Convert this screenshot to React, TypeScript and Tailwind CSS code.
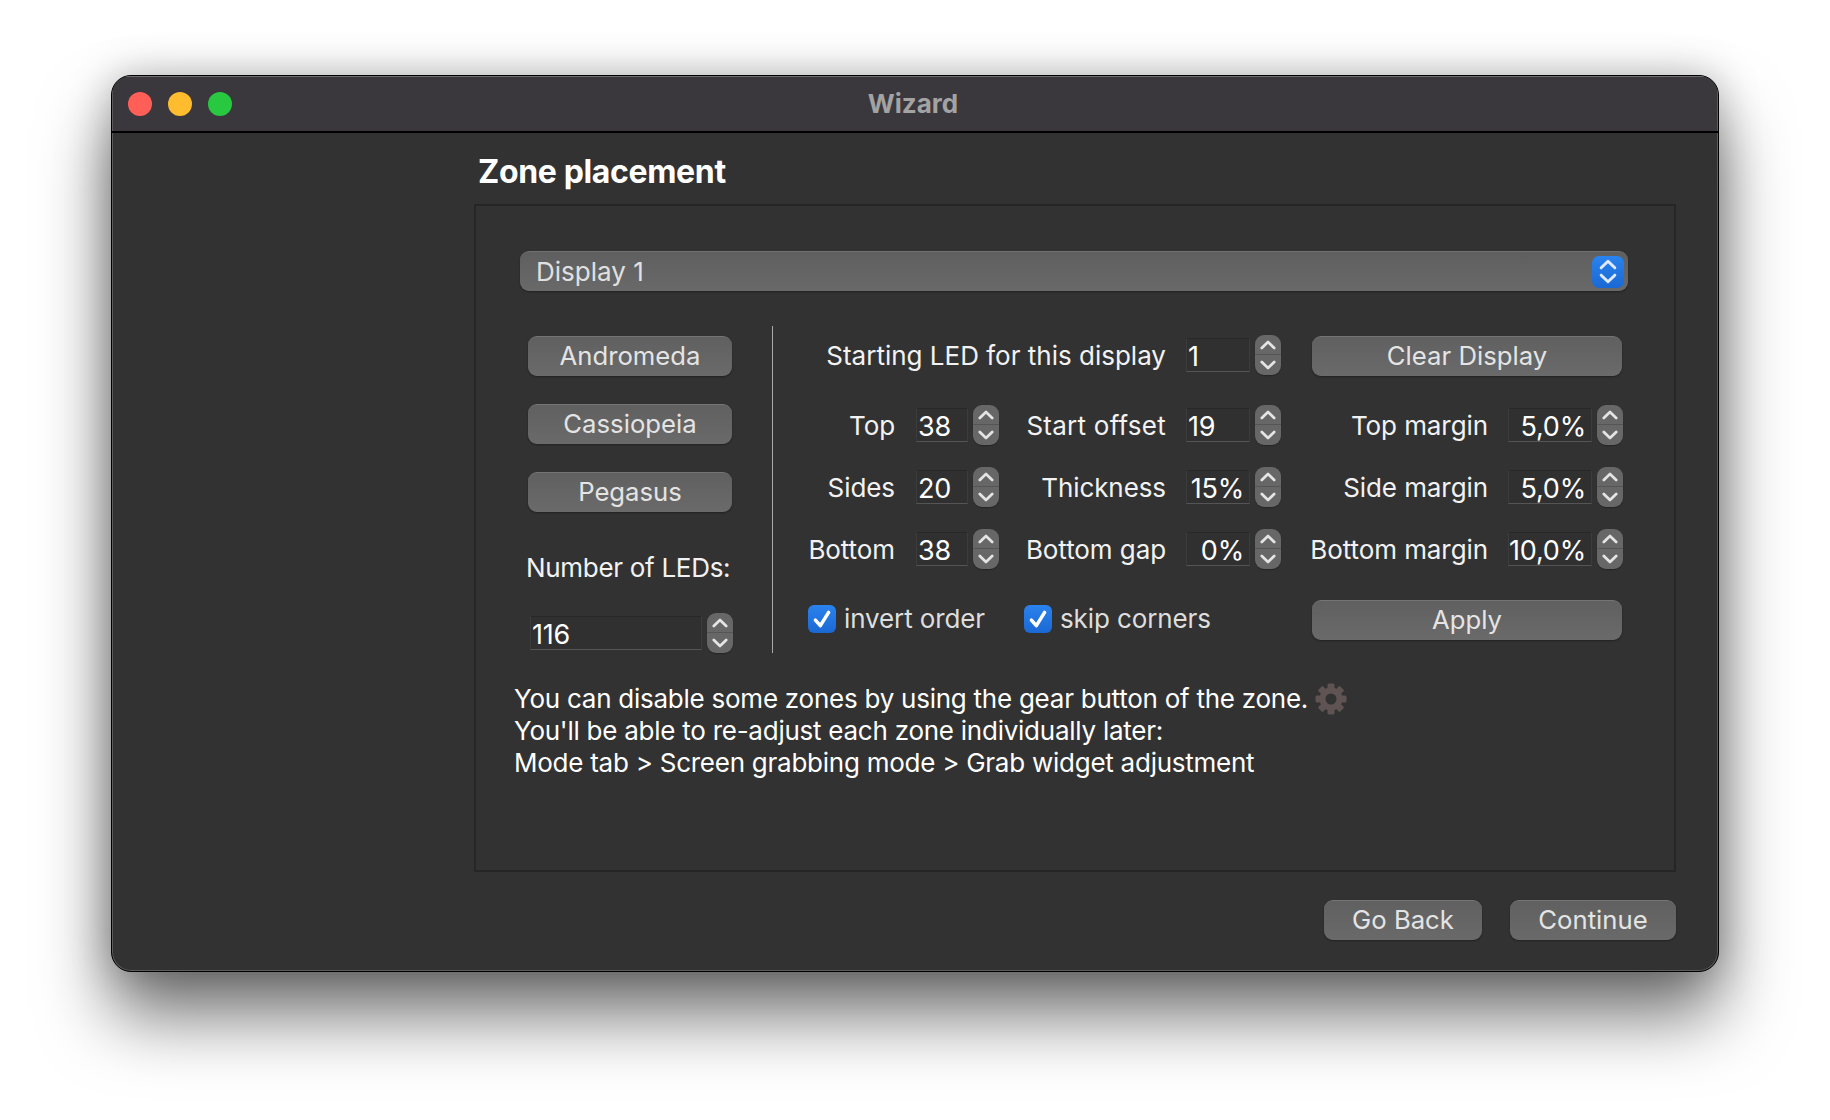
import React from 'react';

const font = "font-['Inter','Liberation_Sans',sans-serif]";

function Chevron({ up, className }: { up?: boolean; className?: string }) {
  return (
    <svg viewBox="0 0 16 10" className={className} fill="none" stroke="currentColor" strokeWidth="2.7" strokeLinecap="round" strokeLinejoin="round">
      <path d={up ? 'M1.8 8 L8 2 L14.2 8' : 'M1.8 2 L8 8 L14.2 2'} />
    </svg>
  );
}

function Stepper() {
  return (
    <div className="flex flex-col w-[26px] h-[40px] shrink-0 rounded-[9px] bg-[#676767] text-[#e4e4e4] overflow-hidden shadow-[0_1px_1px_rgba(0,0,0,0.25)]">
      <div className="h-[20px] flex items-center justify-center border-b border-[#555555]">
        <Chevron up className="w-[16px] h-[10px]" />
      </div>
      <div className="h-[20px] flex items-center justify-center">
        <Chevron className="w-[16px] h-[10px]" />
      </div>
    </div>
  );
}

function SpinInput({ value, width, right }: { value: string; width: string; right?: boolean }) {
  return (
    <div className={`${width} h-[34px] shrink-0 flex items-center pt-[2px] bg-[#303030] border border-[#3c3c3c] border-t-[#282828] border-b-[#555555] text-white text-[27px] tracking-[-0.2px] leading-none ${right ? 'justify-end pr-[5px]' : 'pl-[1px]'}`}>
      {value}
    </div>
  );
}

function Field({ label, value, labelW, inputW, gap, right, tracking = 'tracking-[-0.08px]' }: { label: string; value: string; labelW: string; inputW: string; gap: string; right?: boolean; tracking?: string }) {
  return (
    <div className="flex items-center h-[40px]">
      <div className={`${labelW} ${gap} ${tracking} pt-[2px] text-right text-[#f2f2f2] text-[26px] leading-[36px] whitespace-nowrap`}>{label}</div>
      <SpinInput value={value} width={inputW} right={right} />
      <div className="ml-[5px]"><Stepper /></div>
    </div>
  );
}

function MacButton({ children, className }: { children: React.ReactNode; className: string }) {
  return (
    <button className={`h-[40px] rounded-[9px] bg-gradient-to-b from-[#606060] to-[#6a6a6a] border-t border-[#757575] text-[#e4e4e4] text-[25.7px] leading-none flex items-center justify-center pb-[2px] shadow-[0_1px_2px_rgba(0,0,0,0.35)] ${className}`}>
      {children}
    </button>
  );
}

function Check({ label }: { label: string }) {
  return (
    <div className="flex items-center gap-[8px] pb-[2px]">
      <div className="w-[28px] h-[28px] rounded-[6px] bg-gradient-to-b from-[#2a83ee] to-[#1b68d3] flex items-center justify-center">
        <svg viewBox="0 0 20 20" className="w-[22px] h-[22px]" fill="none" stroke="#ffffff" strokeWidth="3.2" strokeLinecap="round" strokeLinejoin="round">
          <path d="M4 11 L8.5 16 L16 4" />
        </svg>
      </div>
      <span className="text-[#dedede] text-[26px] leading-[32px] tracking-[-0.12px]">{label}</span>
    </div>
  );
}

function Gear() {
  const teeth = [0, 45, 90, 135];
  return (
    <svg viewBox="0 0 32 32" className="w-[32px] h-[32px] shrink-0 ml-[7px]">
      {teeth.map((a) => (
        <rect key={a} x="12.5" y="0.5" width="7" height="31" rx="1.5" fill="#5f5353" transform={`rotate(${a} 16 16)`} />
      ))}
      <circle cx="16" cy="16" r="11.5" fill="#5f5353" />
      <circle cx="16" cy="16" r="5.5" fill="#323232" />
    </svg>
  );
}

export default function App() {
  return (
    <div className={`w-[1830px] h-[1120px] bg-white pt-[75px] pl-[111px] overflow-hidden ${font}`}>
      <div className="w-[1608px] h-[897px] rounded-[20px] bg-[#323232] border border-black flex flex-col overflow-hidden shadow-[inset_0_0_0_1px_#5c5c5c,0_44px_70px_rgba(0,0,0,0.55),0_0_40px_rgba(0,0,0,0.25)]">
        {/* title bar */}
        <div className="h-[57px] shrink-0 relative flex items-center justify-center bg-[#3a383d] border-b-2 border-black shadow-[inset_0_1px_0_#6e6e6e,inset_1px_0_0_#5c5c5c,inset_-1px_0_0_#5c5c5c]">
          <div className="absolute left-[16px] top-[16px] flex gap-[16px]">
            <div className="w-[24px] h-[24px] rounded-full bg-[#ff5f57]" />
            <div className="w-[24px] h-[24px] rounded-full bg-[#febc2e]" />
            <div className="w-[24px] h-[24px] rounded-full bg-[#28c840]" />
          </div>
          <span className="text-[#a3a3a3] text-[26px] font-bold ml-[-4px]">Wizard</span>
        </div>

        <div className="flex-1 pl-[362px] pr-[42px] flex flex-col">
          <h1 className="text-white text-[32px] font-bold tracking-[-0.35px] leading-none ml-[4px] mt-[23px] mb-[16px]">Zone placement</h1>

          {/* group box */}
          <div className="h-[668px] border-2 border-[#262626] pl-[44px] pr-[46px] pt-[45px]">
            <div className="h-[40px] rounded-[9px] bg-gradient-to-b from-[#5f5f5f] to-[#696969] border-t border-[#707070] flex items-center justify-between pl-[16px] pr-[4px] shadow-[0_1px_2px_rgba(0,0,0,0.35)]">
              <span className="text-[#e0e0e0] text-[26px]">Display 1</span>
              <div className="w-[32px] h-[32px] rounded-[7px] bg-gradient-to-b from-[#2a83ee] to-[#1b68d3] flex flex-col items-center justify-center gap-[3px] text-[#dfeaff]">
                <Chevron up className="w-[18px] h-[11px]" />
                <Chevron className="w-[18px] h-[11px]" />
              </div>
            </div>

            <div className="flex mt-[35px] h-[327px]">
              {/* presets */}
              <div className="w-[205px] ml-[8px] shrink-0 pt-[10px] flex flex-col">
                <div className="flex flex-col gap-[28px]">
                  <MacButton className="w-[204px]">Andromeda</MacButton>
                  <MacButton className="w-[204px]">Cassiopeia</MacButton>
                  <MacButton className="w-[204px]">Pegasus</MacButton>
                </div>
                <div className="mt-[40px] ml-[-2px] text-[#f2f2f2] text-[26px] tracking-[-0.3px] whitespace-nowrap leading-[32px]">Number of LEDs:</div>
                <div className="flex items-center mt-[29px] ml-[2px]">
                  <SpinInput value="116" width="w-[172px]" />
                  <div className="ml-[5px]"><Stepper /></div>
                </div>
              </div>

              <div className="w-[1px] h-[327px] bg-[#a8a8a8] ml-[39px] shrink-0" />

              {/* zone fields */}
              <div className="ml-[35px] pt-[9px] flex flex-col">
                <div className="flex items-center h-[40px]">
                  <Field label="Starting LED for this display" value="1" labelW="w-[358px]" inputW="w-[64px]" gap="mr-[20px]" tracking="tracking-[0px]" />
                  <MacButton className="w-[310px] ml-[31px] translate-y-[1px]">Clear Display</MacButton>
                </div>
                <div className="flex items-center h-[40px] mt-[30px]">
                  <Field label="Top" value="38" labelW="w-[87px]" inputW="w-[52px]" gap="mr-[21px]" />
                  <Field label="Start offset" value="19" labelW="w-[167px]" inputW="w-[64px]" gap="mr-[20px]" tracking="tracking-[0.25px]" />
                  <Field label="Top margin" value="5,0%" labelW="w-[207px]" inputW="w-[84px]" gap="mr-[20px]" right />
                </div>
                <div className="flex items-center h-[40px] mt-[22px]">
                  <Field label="Sides" value="20" labelW="w-[87px]" inputW="w-[52px]" gap="mr-[21px]" />
                  <Field label="Thickness" value="15%" labelW="w-[167px]" inputW="w-[64px]" gap="mr-[20px]" right />
                  <Field label="Side margin" value="5,0%" labelW="w-[207px]" inputW="w-[84px]" gap="mr-[20px]" right />
                </div>
                <div className="flex items-center h-[40px] mt-[22px]">
                  <Field label="Bottom" value="38" labelW="w-[87px]" inputW="w-[52px]" gap="mr-[21px]" />
                  <Field label="Bottom gap" value="0%" labelW="w-[167px]" inputW="w-[64px]" gap="mr-[20px]" right />
                  <Field label="Bottom margin" value="10,0%" labelW="w-[207px]" inputW="w-[84px]" gap="mr-[20px]" right />
                </div>
                <div className="flex items-center h-[40px] mt-[31px]">
                  <div className="w-[216px]"><Check label="invert order" /></div>
                  <div className="w-[288px]"><Check label="skip corners" /></div>
                  <MacButton className="w-[310px]">Apply</MacButton>
                </div>
              </div>
            </div>

            {/* hint text */}
            <div className="mt-[30px] ml-[-6px] text-white text-[26px] tracking-[-0.25px] leading-[32px]">
              <div className="flex items-center h-[32px]">
                <span>You can disable some zones by using the gear button of the zone.</span>
                <Gear />
              </div>
              <div>You'll be able to re-adjust each zone individually later:</div>
              <div>Mode tab &gt; Screen grabbing mode &gt; Grab widget adjustment</div>
            </div>
          </div>

          <div className="flex justify-end gap-[28px] mt-[28px]">
            <MacButton className="w-[158px]">Go Back</MacButton>
            <MacButton className="w-[166px]">Continue</MacButton>
          </div>
        </div>
      </div>
    </div>
  );
}
